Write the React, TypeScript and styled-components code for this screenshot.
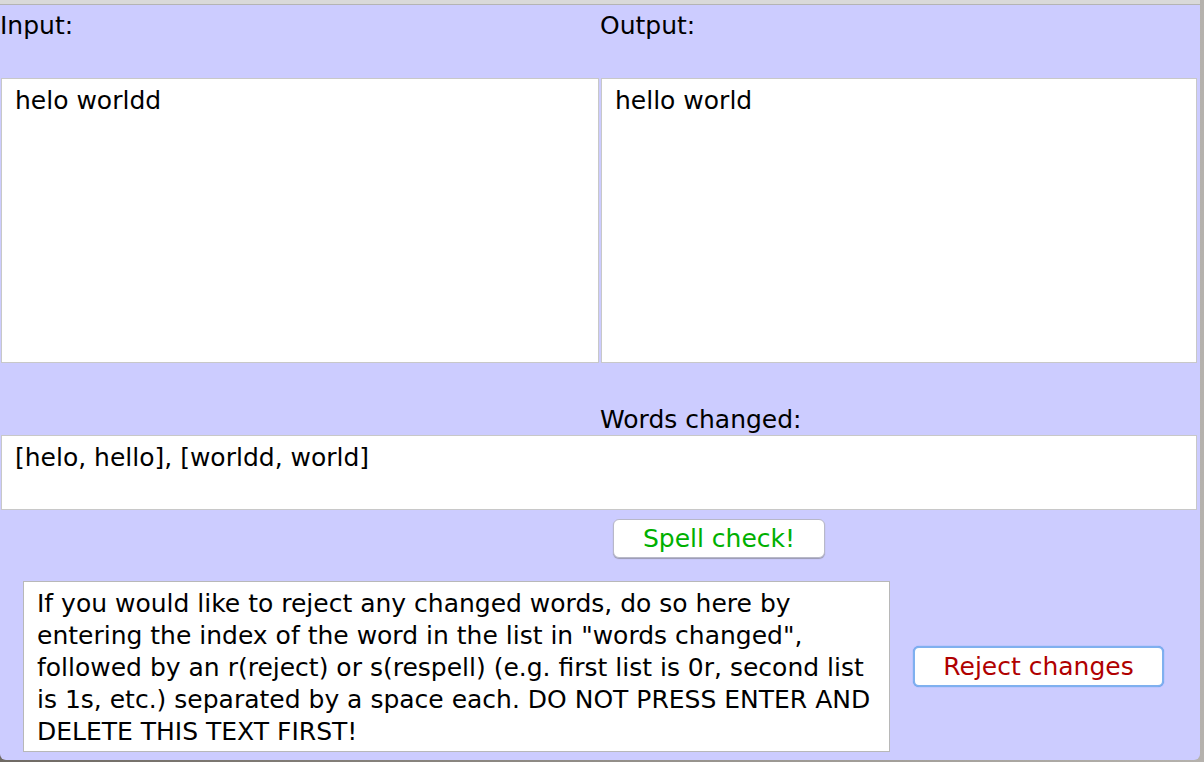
import React from 'react';
import styled, {createGlobalStyle} from 'styled-components';

const GlobalStyle = createGlobalStyle`
    html, body {
        margin: 0;
        padding: 0;
        background: #8c8a86;
    }
    body {
        font-family: "DejaVu Sans", "Liberation Sans", sans-serif;
    }
`;

const Screen = styled.div`
    width: 1204px;
    height: 762px;
    display: flex;
    overflow: hidden;
    background: linear-gradient(90deg, #6f6a64, #b5b2ad);
`;

const Window = styled.div`
    width: 1200px;
    height: 760px;
    display: flex;
    flex-direction: column;
    background: #ccccff;
    border-radius: 0 0 6px 6px;
    overflow: hidden;
`;

const TitleEdge = styled.div`
    height: 4px;
    background: #d9d9d9;
    border-bottom: 1px solid #b4b4b4;
`;

const Row = styled.div<{ $height: number; $align?: string }>`
    display: grid;
    grid-template-columns: 600px 1fr;
    height: ${p => p.$height}px;
    align-items: ${p => p.$align || 'stretch'};
`;

const Label = styled.div`
    font-size: 25px;
    color: #000;
    line-height: 29px;
`;

const TextBox = styled.div<{ $side?: 'left' | 'right' }>`
    margin: ${p => p.$side === 'right' ? '0 3px 0 1px' : '0 1px 0 1px'};
    background: #fff;
    border: 1px solid #c8c8c8;
    font-size: 25px;
    line-height: 29px;
    padding: 7px 13px;
    color: #000;
`;

const WideBox = styled(TextBox)`
    height: 75px;
    box-sizing: border-box;
    margin: 0 3px 0 1px;
`;

const Bottom = styled.div`
    flex: 1;
    display: flex;
    flex-direction: column;
`;

const ButtonRow = styled.div`
    display: flex;
    padding: 9px 0 0 613px;
    height: 60px;
    box-sizing: border-box;
`;

const Button = styled.button<{ $color: string; $focused?: boolean }>`
    font-family: "DejaVu Sans", "Liberation Sans", sans-serif;
    font-size: 25px;
    color: ${p => p.$color};
    background: #fff;
    border-radius: 6px;
    border: ${p => p.$focused ? '2px solid #7fb0ef' : '1px solid #b8b8c8'};
    box-shadow: ${p => p.$focused ? '0 0 1px #3d86e6' : '0 1px 1px #9a9ab0'};
    padding: 0;
    cursor: pointer;
`;

const SpellButton = styled(Button)`
    width: 212px;
    height: 39px;
`;

const RejectButton = styled(Button)`
    width: 251px;
    height: 41px;
`;

const RejectArea = styled.div`
    display: flex;
    align-items: center;
    gap: 23px;
    padding: 11px 0 0 23px;
`;

const Instructions = styled.div`
    width: 867px;
    height: 171px;
    box-sizing: border-box;
    background: #fff;
    border: 1px solid #b8b8b8;
    font-size: 25px;
    line-height: 32px;
    padding: 6px 13px;
    color: #000;
    white-space: pre-line;
`;

const instructionText = `If you would like to reject any changed words, do so here by
entering the index of the word in the list in "words changed",
followed by an r(reject) or s(respell) (e.g. first list is 0r, second list
is 1s, etc.) separated by a space each. DO NOT PRESS ENTER AND
DELETE THIS TEXT FIRST!`;

export default function App() {
    return (
        <>
            <GlobalStyle/>
            <Screen>
                <Window>
                    <TitleEdge/>
                    <Row $height={73}>
                        <Label style={{paddingTop: 6}}>Input:</Label>
                        <Label style={{paddingTop: 6}}>Output:</Label>
                    </Row>
                    <Row $height={285}>
                        <TextBox $side="left">helo worldd</TextBox>
                        <TextBox $side="right">hello world</TextBox>
                    </Row>
                    <Row $height={72} $align="end">
                        <div/>
                        <Label style={{paddingBottom: 1}}>Words changed:</Label>
                    </Row>
                    <WideBox>[helo, hello], [worldd, world]</WideBox>
                    <Bottom>
                        <ButtonRow>
                            <SpellButton $color="#00b000">Spell check!</SpellButton>
                        </ButtonRow>
                        <RejectArea>
                            <Instructions>{instructionText}</Instructions>
                            <RejectButton $color="#b00000" $focused>Reject changes</RejectButton>
                        </RejectArea>
                    </Bottom>
                </Window>
            </Screen>
        </>
    );
}
